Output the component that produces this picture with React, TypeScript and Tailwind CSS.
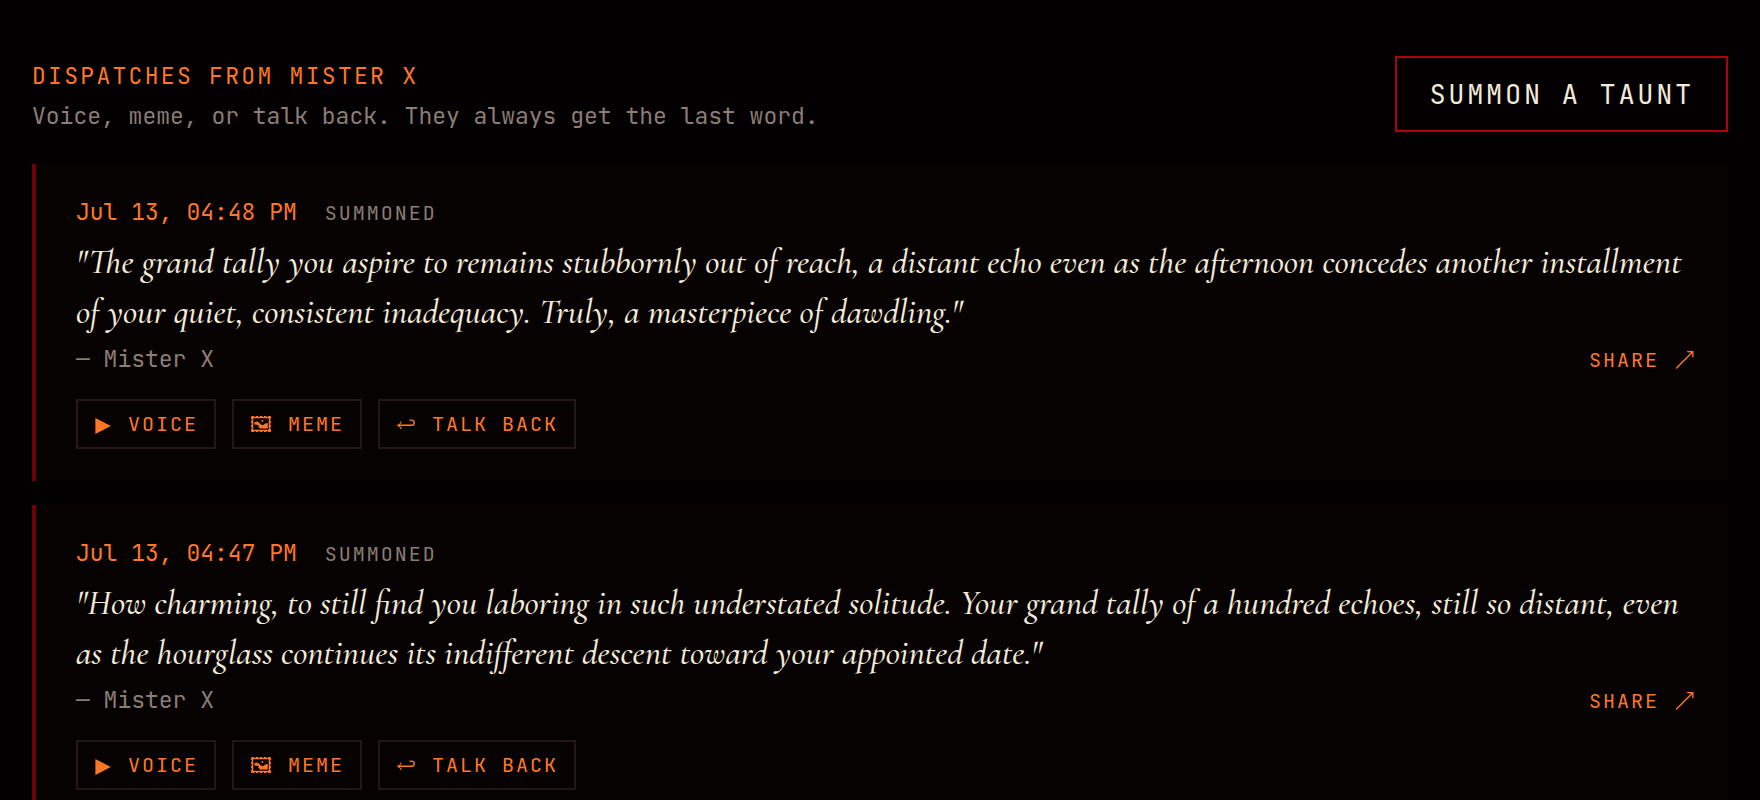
import type { ReactNode } from 'react'

const TAUNTS = [
  {
    id: 1,
    date: 'Jul 13, 04:48 PM',
    quote:
      '"The grand tally you aspire to remains stubbornly out of reach, a distant echo even as the afternoon concedes another installment of your quiet, consistent inadequacy. Truly, a masterpiece of dawdling."',
  },
  {
    id: 2,
    date: 'Jul 13, 04:47 PM',
    quote:
      '"How charming, to still find you laboring in such understated solitude. Your grand tally of a hundred echoes, still so distant, even as the hourglass continues its indifferent descent toward your appointed date."',
  },
]

function PlayIcon() {
  return (
    <svg width="16" height="20" viewBox="0 0 16 20" fill="currentColor" aria-hidden="true">
      <path d="M.4 4 15.8 12 .4 20Z" />
    </svg>
  )
}

function FrameIcon() {
  return (
    <svg width="20" height="16" viewBox="0 0 20 16" fill="none" stroke="currentColor" aria-hidden="true">
      <rect x="1.6" y="1.6" width="16.8" height="12.8" strokeWidth="1.3" />
      <path d="M.6.7h19M.6 15.3h19" strokeWidth="1.2" strokeDasharray="2.6 1.5" />
      <path d="M.6.6v15M19.4.6v15" strokeWidth="1" strokeDasharray="2.6 1.5" />
      <path d="M3.4 6.2 5.6 5.4 8 6.4 9.4 8.2 12 9.2 14.2 7.6 16.8 7V12.6H9L7 10.2 8 9 3.4 8.4Z" fill="currentColor" stroke="none" />
      <circle cx="11.4" cy="5" r="1" fill="currentColor" stroke="none" />
    </svg>
  )
}

function ReplyIcon() {
  return (
    <svg width="18" height="12" viewBox="0 0 18 12" fill="none" stroke="currentColor" strokeWidth="1.4" aria-hidden="true">
      <path d="M1 7.3h13.6a2.6 2.6 0 0 0 0-5.2h-2.2" />
      <path d="M4.4 3.6C3.6 5.4 2.6 6.6.8 7.3c1.8.7 2.8 1.9 3.6 3.7" strokeWidth="1.1" />
    </svg>
  )
}

function ShareIcon() {
  return (
    <svg width="20" height="20" viewBox="0 0 20 20" fill="none" stroke="currentColor" aria-hidden="true">
      <path d="M0 18.5 16.5 2" strokeWidth="1.5" />
      <path d="M11 1h6.5v6.5L16.2 7V3.6L15 2.4 11.4 2.2Z" fill="currentColor" stroke="none" />
    </svg>
  )
}

function ActionButton({ icon, children }: { icon: ReactNode; children: ReactNode }) {
  return (
    <button
      type="button"
      className="flex h-[50px] items-center gap-[17px] border-2 border-[#241719] pr-4 pl-[17px] text-[20px] tracking-widest text-[#ff7726] uppercase"
    >
      {icon}
      {children}
    </button>
  )
}

function TauntCard({ date, quote }: { date: string; quote: string }) {
  return (
    <article className="border-l-4 border-[#6e0007] bg-[#060201] py-8 pr-8 pl-10">
      <div className="flex items-baseline gap-7 leading-8">
        <time className="text-[#ff7726]">{date}</time>
        <span className="text-[20px] leading-6 tracking-widest text-[#8c7d76] uppercase">Summoned</span>
      </div>
      <blockquote className="mt-[9px] pr-2 font-['Cormorant_Garamond','Liberation_Serif',serif] text-[35px] leading-[50px] font-medium text-[#f4ead8] italic">
        {quote}
      </blockquote>
      <div className="mt-1.5 flex items-baseline justify-between leading-8">
        <span className="text-[#8c7d76]">— Mister X</span>
        <a href="#share" className="flex items-center gap-[17px] text-[20px] leading-6 tracking-widest text-[#ff7726] uppercase">
          Share
          <ShareIcon />
        </a>
      </div>
      <div className="mt-6 flex flex-wrap gap-4">
        <ActionButton icon={<PlayIcon />}>Voice</ActionButton>
        <ActionButton icon={<FrameIcon />}>Meme</ActionButton>
        <ActionButton icon={<ReplyIcon />}>Talk back</ActionButton>
      </div>
    </article>
  )
}

export default function App() {
  return (
    <main className="min-h-screen bg-[#020001] px-8 pt-14 pb-8 font-['JetBrains_Mono','DejaVu_Sans_Mono',monospace] text-[23px]">
      <header className="flex items-end justify-between gap-8">
        <div className="leading-8">
          <h1 className="tracking-widest text-[#ff7726] uppercase">Dispatches from Mister X</h1>
          <p className="mt-2 text-[#8c7d76]">Voice, meme, or talk back. They always get the last word.</p>
        </div>
        <button
          type="button"
          className="h-[76px] shrink-0 border-2 border-[#b0000f] px-8 text-[27px] tracking-widest text-[#f4ead8] uppercase"
        >
          Summon a taunt
        </button>
      </header>
      <section className="mt-8 flex flex-col gap-6">
        {TAUNTS.map((taunt) => (
          <TauntCard key={taunt.id} date={taunt.date} quote={taunt.quote} />
        ))}
      </section>
    </main>
  )
}
